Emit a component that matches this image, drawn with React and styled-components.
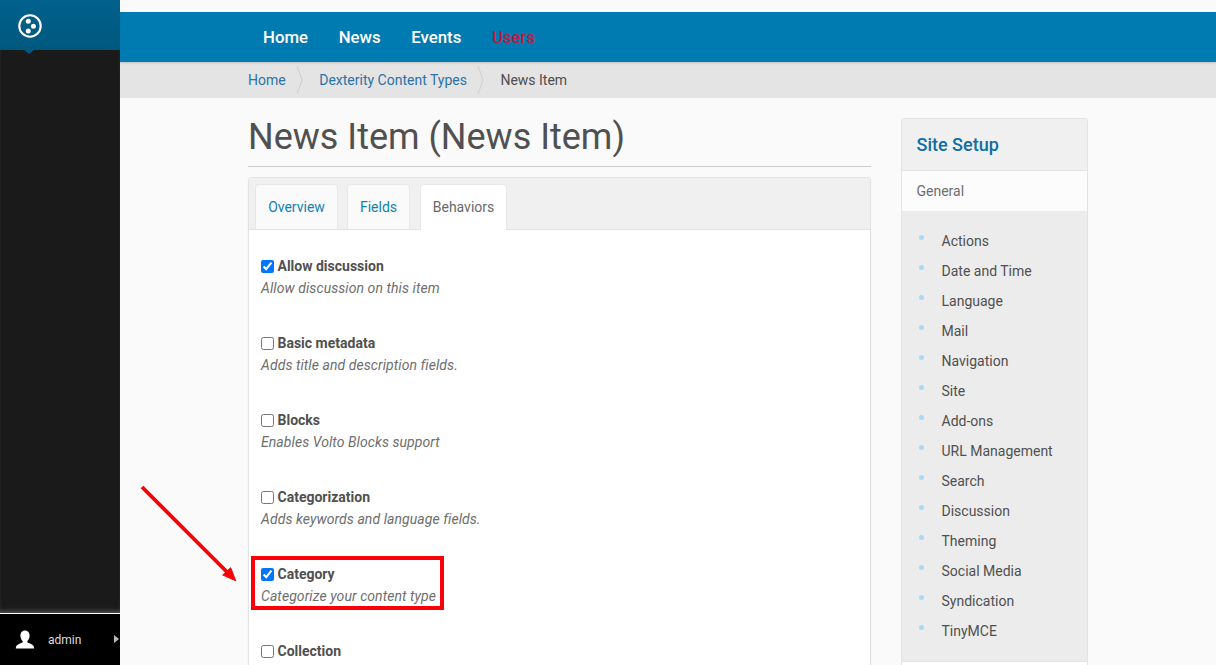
import React from "react";
import styled, { createGlobalStyle } from "styled-components";

const Global = createGlobalStyle`
  html, body { margin: 0; padding: 0; height: 665px; overflow: hidden; background: #fafafa; }
  body { font-family: Roboto, "Liberation Sans", sans-serif; color: #4d4d4d; }
  * { box-sizing: border-box; }
`;

const Page = styled.div`
  display: flex; width: 1216px; height: 665px; position: relative; overflow: hidden; background: #fafafa;
`;
const Toolbar = styled.aside`
  width: 120px; flex: none; display: flex; flex-direction: column; background: #1a1a1a;
`;
const Logo = styled.div`
  height: 50px; background: linear-gradient(#00618c, #00587f); padding: 14px 0 0 18px; position: relative;
  &::after {
    content: ""; position: absolute; left: 24px; top: 50px;
    border: 5px solid transparent; border-top: 4px solid #00587f; border-bottom: 0;
  }
`;
const ToolbarFill = styled.div`
  flex: 1; background: #1a1a1a;
  box-shadow: inset 0 -4px 4px -2px rgba(255,255,255,.25);
`;
const UserBar = styled.div`
  height: 52px; background: #000; border-top: 1px solid #fff; display: flex; align-items: center;
  padding: 0 0 0 15px; color: #ddd; font-size: 12px; position: relative;
  span { margin-left: 13px; }
  &::after {
    content: ""; position: absolute; right: 1px; top: 21px;
    border: 4px solid transparent; border-left: 5px solid #bbb; border-right: 0;
  }
`;
const Main = styled.main`
  flex: 1; min-width: 0; padding-top: 12px;
`;
const Nav = styled.nav`
  height: 50px; background: #007bb1; display: flex; align-items: center; gap: 30.6px;
  padding: 0 0 0 143px; box-shadow: 0 1px 2px rgba(0,0,0,.17); position: relative;
`;
const NavLink = styled.a`
  font-size: 16.8px; font-weight: 500; color: ${p => p.$red ? "#c4183c" : "#fff"};
`;
const Crumbs = styled.div`
  height: 36px; background: #e5e4e4; display: flex; align-items: center; padding-left: 128px; font-size: 14px;
`;
const Crumb = styled.a`
  color: ${p => p.$current ? "#4d4d4d" : "#2a73a6"};
`;
const Chevron = styled.svg`
  width: 8px; height: 30px; margin: 0 15.5px 0 10px; flex: none;
`;
const Content = styled.div`
  display: flex; gap: 30px; padding: 18px 0 0 128px;
`;
const Column = styled.div`
  width: 623px; flex: none;
`;
const Title = styled.h1`
  margin: 0; height: 51px; border-bottom: 1px solid #ccc; font-size: 36px; font-weight: 400; line-height: 42px; color: #505050;
`;
const Card = styled.section`
  margin-top: 10px; background: #fff; border: 1px solid #e3e3e3; border-radius: 4px 4px 0 0; border-bottom: 0;
  box-shadow: 0 1px 2px rgba(0,0,0,.05); height: 500px;
`;
const Tabs = styled.div`
  height: 52px; background: #f0f0f0; border-bottom: 1px solid #e3e3e3; display: flex; padding: 6px 0 0 6px; border-radius: 4px 4px 0 0;
`;
const Tab = styled.a`
  height: ${p => p.$active ? "46px" : "45px"}; width: ${p => p.$w}px; margin-right: ${p => p.$gap}px; background: ${p => p.$active ? "#fff" : "#fafafa"};
  border: 1px solid #e8e8e8; border-bottom: 0; border-radius: 4px 4px 0 0; z-index: 1;
  padding-bottom: ${p => p.$active ? "1px" : "0"};
  display: flex; align-items: center; justify-content: center; font-size: 14px;
  color: ${p => p.$active ? "#696969" : "#0f82b5"};
`;
const Behaviors = styled.div`
  padding: 25px 12px 0;
`;
const Behavior = styled.div`
  height: 77px;
`;
const Label = styled.label`
  display: flex; align-items: center; height: 22px; font-size: 14px; font-weight: 700; color: #505050;
  input { width: 13px; height: 13px; margin: 0 3.5px 0 0; flex: none; }
`;
const Hint = styled.div`
  font-size: 14px; font-style: italic; color: #6e6e6e; line-height: 22px; letter-spacing: .07px;
`;
const Side = styled.aside`
  width: 187px; flex: none; margin-top: 2px; background: #fff; border: 1px solid #e3e3e3; border-bottom: 0; border-radius: 4px 4px 0 0; height: 560px;
`;
const SideHead = styled.h2`
  margin: 0; height: 52px; background: #f0f0f0; border-bottom: 1px solid #e3e3e3; padding: 0 14.5px; font-size: 18px; font-weight: 500;
  line-height: 51px; color: #0f6ea5; border-radius: 4px 4px 0 0;
`;
const SideSection = styled.div`
  height: 40px; background: #fcfcfc; padding: 0 14.5px; font-size: 14px; line-height: 40px; color: #6e6e6e;
`;
const SideList = styled.ul`
  margin: 0; padding: 15px 0 15px 0; list-style: none; background: #ececec; border-bottom: 1px solid #e3e3e3;
`;
const SideItem = styled.li`
  height: 30px; line-height: 30px; padding-left: 39.5px; font-size: 14px; color: #505050; position: relative;
  &::before {
    content: ""; position: absolute; left: 17px; top: 9px; width: 5px; height: 5px; border-radius: 50%; background: #a8daf5;
  }
`;
const Highlight = styled.div`
  position: absolute; left: 251px; top: 556px; width: 193px; height: 54px; border: 4px solid #fb0007; pointer-events: none;
`;
const Arrow = styled.svg`
  position: absolute; left: 135px; top: 480px; width: 110px; height: 110px; pointer-events: none;
`;

const items = [
  ["Allow discussion", "Allow discussion on this item", true],
  ["Basic metadata", "Adds title and description fields.", false],
  ["Blocks", "Enables Volto Blocks support", false],
  ["Categorization", "Adds keywords and language fields.", false],
  ["Category", "Categorize your content type", true],
  ["Collection", "", false],
];
const setup = ["Actions","Date and Time","Language","Mail","Navigation","Site","Add-ons","URL Management","Search","Discussion","Theming","Social Media","Syndication","TinyMCE"];

const Sep = () => (
  <Chevron viewBox="0 0 8 30"><path d="M1 1 L6 15 L1 29" fill="none" stroke="#cfcfcf" strokeWidth="1" /></Chevron>
);

export default function App() {
  return (
    <Page>
      <Global />
      <Toolbar>
        <Logo>
          <svg width="24" height="24" viewBox="0 0 24 24">
            <circle cx="12" cy="12" r="10.7" fill="none" stroke="#fff" strokeWidth="2.1" />
            <circle cx="10.3" cy="7.3" r="2.5" fill="#fff" />
            <circle cx="15.4" cy="12.2" r="2.5" fill="#fff" />
            <circle cx="10.3" cy="17" r="2.5" fill="#fff" />
          </svg>
        </Logo>
        <ToolbarFill />
        <UserBar>
          <svg width="20" height="20" viewBox="0 0 20 20">
            <path fill="#fff" d="M10 0.5c3 0 4.6 2.3 4.6 5.2 0 2.3-1 4-2.2 5.2-.3.9 0 1.6 1.2 2.1 2.4.9 5.4 1.7 5.6 5.4H.8c.2-3.7 3.2-4.5 5.6-5.4 1.2-.5 1.5-1.2 1.2-2.1C6.4 9.7 5.4 8 5.4 5.7 5.4 2.8 7 .5 10 .5z" />
          </svg>
          <span>admin</span>
        </UserBar>
      </Toolbar>
      <Main>
        <Nav>
          <NavLink>Home</NavLink>
          <NavLink>News</NavLink>
          <NavLink>Events</NavLink>
          <NavLink $red>Users</NavLink>
        </Nav>
        <Crumbs>
          <Crumb>Home</Crumb><Sep />
          <Crumb>Dexterity Content Types</Crumb><Sep />
          <Crumb $current>News Item</Crumb>
        </Crumbs>
        <Content>
          <Column>
            <Title>News Item (News Item)</Title>
            <Card>
              <Tabs>
                <Tab $w={83} $gap={9}>Overview</Tab>
                <Tab $w={63} $gap={10}>Fields</Tab>
                <Tab $w={87} $gap={0} $active>Behaviors</Tab>
              </Tabs>
              <Behaviors>
                {items.map(([t, d, c]) => (
                  <Behavior key={t}>
                    <Label><input type="checkbox" defaultChecked={c} />{t}</Label>
                    {d && <Hint>{d}</Hint>}
                  </Behavior>
                ))}
              </Behaviors>
            </Card>
          </Column>
          <Side>
            <SideHead>Site Setup</SideHead>
            <SideSection>General</SideSection>
            <SideList>
              {setup.map(s => <SideItem key={s}>{s}</SideItem>)}
            </SideList>
          </Side>
        </Content>
      </Main>
      <Highlight />
      <Arrow viewBox="0 0 110 110">
        <path d="M7 7 L92 92" stroke="#fb0007" strokeWidth="3.8" fill="none" />
        <path d="M100.7 100.7 L87.7 95 L95.7 87.7 Z" fill="#fb0007" stroke="#fb0007" strokeWidth="1" />
      </Arrow>
    </Page>
  );
}
